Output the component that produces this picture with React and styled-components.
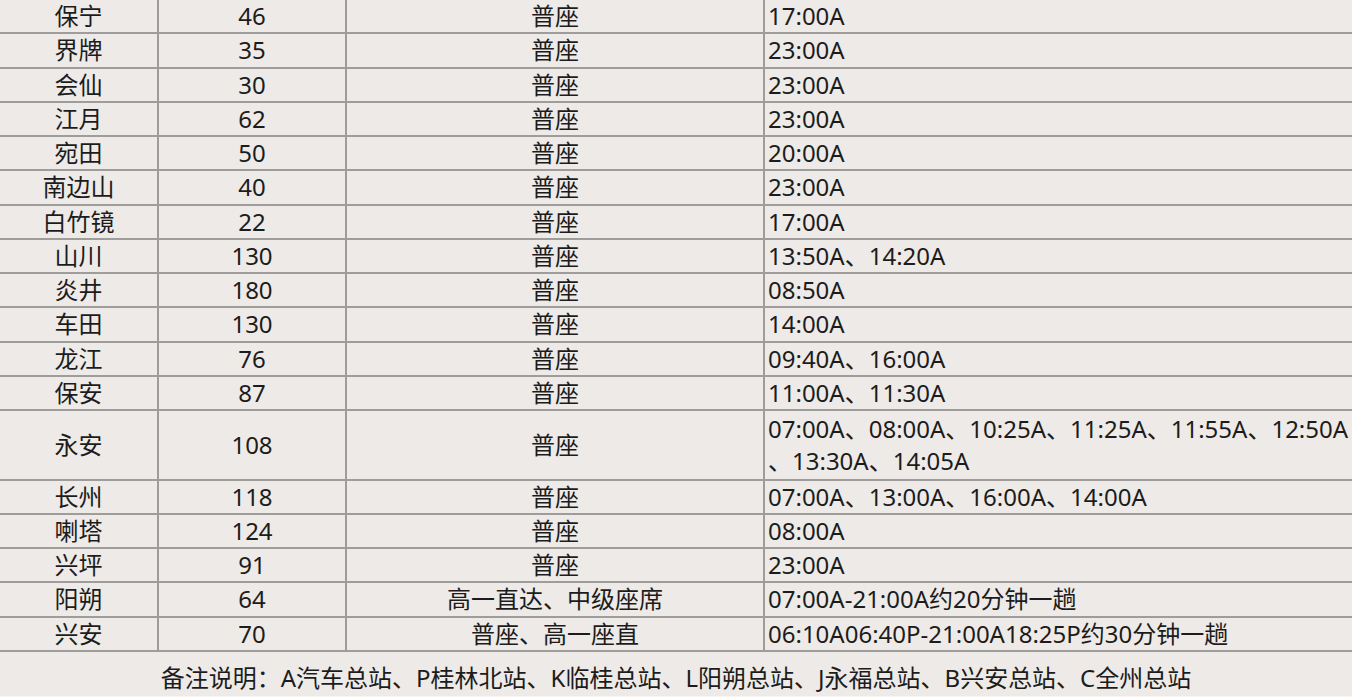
import styled, { createGlobalStyle } from "styled-components";

const GlobalStyle = createGlobalStyle`
  html, body {
    margin: 0;
    padding: 0;
    background: #f6f4f2;
  }
`;

const rows = [
  ["保宁", "46", "普座", ["17:00A"]],
  ["界牌", "35", "普座", ["23:00A"]],
  ["会仙", "30", "普座", ["23:00A"]],
  ["江月", "62", "普座", ["23:00A"]],
  ["宛田", "50", "普座", ["20:00A"]],
  ["南边山", "40", "普座", ["23:00A"]],
  ["白竹镜", "22", "普座", ["17:00A"]],
  ["山川", "130", "普座", ["13:50A、14:20A"]],
  ["炎井", "180", "普座", ["08:50A"]],
  ["车田", "130", "普座", ["14:00A"]],
  ["龙江", "76", "普座", ["09:40A、16:00A"]],
  ["保安", "87", "普座", ["11:00A、11:30A"]],
  [
    "永安",
    "108",
    "普座",
    ["07:00A、08:00A、10:25A、11:25A、11:55A、12:50A", "、13:30A、14:05A"],
  ],
  ["长州", "118", "普座", ["07:00A、13:00A、16:00A、14:00A"]],
  ["喇塔", "124", "普座", ["08:00A"]],
  ["兴坪", "91", "普座", ["23:00A"]],
  ["阳朔", "64", "高一直达、中级座席", ["07:00A-21:00A约20分钟一趟"]],
  ["兴安", "70", "普座、高一座直", ["06:10A06:40P-21:00A18:25P约30分钟一趟"]],
];

function App() {
  return (
    <>
      <GlobalStyle />
      <Viewport>
        <Table>
          <colgroup>
            <col style={{ width: 159 }} />
            <col style={{ width: 188 }} />
            <col style={{ width: 418 }} />
            <col />
          </colgroup>
          <tbody>
            {rows.map(([stop, price, seat, times]) => (
              <Row key={stop} $tall={times.length > 1}>
                <Cell>{stop}</Cell>
                <Cell>{price}</Cell>
                <Cell>{seat}</Cell>
                <TimeCell>
                  {times.map((t, i) => (
                    <TimeLine key={i}>{t}</TimeLine>
                  ))}
                </TimeCell>
              </Row>
            ))}
            <FootRow>
              <FootCell colSpan={4}>
                备注说明：A汽车总站、P桂林北站、K临桂总站、L阳朔总站、J永福总站、B兴安总站、C全州总站
              </FootCell>
            </FootRow>
          </tbody>
        </Table>
      </Viewport>
    </>
  );
}

const Viewport = styled.div`
  width: 1352px;
  height: 697px;
  overflow: hidden;
  padding-top: 1px;
  box-sizing: border-box;
  background: #f8f6f4;
`;

const Table = styled.table`
  border-collapse: collapse;
  table-layout: fixed;
  width: 1356px;
  margin: -3px 0 0 -2px;
  background: #eeeae7;
  font-family: "Noto Sans", "Noto Sans CJK SC", sans-serif;
  font-size: 24px;
  color: #1c1c1c;
`;

const Row = styled.tr`
  height: ${({ $tall }) => ($tall ? "69.5px" : "34.25px")};
`;

const Cell = styled.td`
  border: 2px solid #9e9d9b;
  padding: 0;
  text-align: center;
  vertical-align: middle;
  line-height: 30px;
  white-space: nowrap;
  overflow: hidden;
`;

const TimeCell = styled(Cell)`
  text-align: left;
  padding-left: 3px;
`;

const TimeLine = styled.div`
  line-height: 32px;
  white-space: nowrap;
`;

const FootRow = styled.tr`
  height: 46px;
`;

const FootCell = styled(Cell)`
  vertical-align: bottom;
  line-height: 36px;
  border-bottom: 2px solid #f8f6f4;
`;

export default App;
